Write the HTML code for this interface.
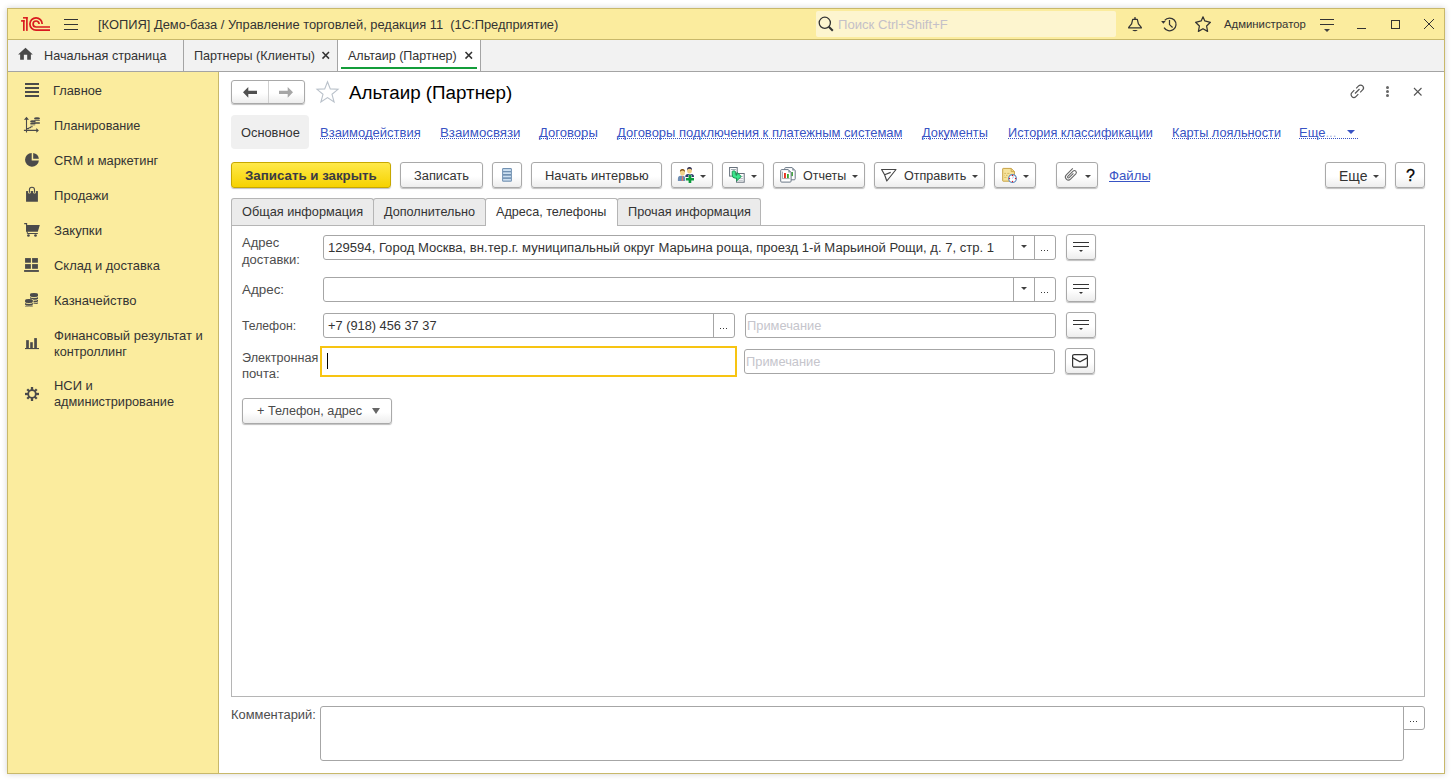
<!DOCTYPE html>
<html><head><meta charset="utf-8">
<style>
*{box-sizing:border-box;margin:0;padding:0}
html,body{width:1452px;height:781px;overflow:hidden;background:#fff;font-family:"Liberation Sans",sans-serif;font-size:13px;color:#333}
.a{position:absolute}
.t{position:absolute;white-space:nowrap;line-height:16px;font-size:13px}
#win{position:absolute;left:7px;top:8px;width:1438px;height:766px;border:1px solid #c8b86a;box-shadow:0 0 6px rgba(0,0,0,0.18);background:#fff;overflow:hidden}
svg{position:absolute;overflow:visible}
.btn{position:absolute;border:1px solid #a9a9a9;border-radius:3px;background:linear-gradient(#fff 0%,#fff 55%,#ededed 100%);box-shadow:0 1px 1px rgba(0,0,0,0.25)}
.fld{position:absolute;border:1px solid #a6a6a6;border-radius:3px;background:#fff}
.lnk{position:absolute;white-space:nowrap;line-height:16px;font-size:13px;color:#3853c4;border-bottom:1px dotted #3853c4;height:15px}
.dd{position:absolute;width:0;height:0;border-left:3px solid transparent;border-right:3px solid transparent;border-top:3px solid #404040}
</style></head><body>
<div id="win"></div>

<!-- title bar -->
<div class="a" style="left:8px;top:9px;width:1436px;height:30px;background:#fbec9e"></div>
<div class="a" style="left:8px;top:39px;width:1436px;height:1px;background:#c8b86a"></div>
<svg style="left:18px;top:14px" width="36" height="20" viewBox="0 0 36 20">
 <g fill="#d9191f">
 <rect x="3.07" y="6.1" width="3.6" height="1.6"/><rect x="5" y="6.1" width="1.66" height="10.8"/>
 <rect x="5" y="3.07" width="4.7" height="1.55"/><rect x="8.07" y="3.07" width="1.63" height="13.83"/>
 </g>
 <g fill="none" stroke="#d9191f" stroke-width="1.7">
 <path d="M24.2 10 A6.15 6.15 0 1 0 18.1 16.15 L32 16.15"/>
 <path d="M21.1 10 A3 3 0 1 0 18.1 13 L32 13"/>
 </g>
</svg>
<div class="a" style="left:64px;top:19px;width:14px;height:1px;background:#333"></div>
<div class="a" style="left:64px;top:24px;width:14px;height:1px;background:#333"></div>
<div class="a" style="left:64px;top:29px;width:14px;height:1px;background:#333"></div>
<div class="t" style="left:98px;top:17px;font-size:12.88px;color:#333">[КОПИЯ] Демо-база / Управление торговлей, редакция 11&nbsp; (1С:Предприятие)</div>

<div class="a" style="left:816px;top:11px;width:300px;height:26px;background:#fdf5cf;border-radius:2px"></div>
<svg style="left:818px;top:16px" width="16" height="16" viewBox="0 0 16 16"><circle cx="6.8" cy="6.8" r="5.6" fill="none" stroke="#333" stroke-width="1.3"/><path d="M10.8 10.8 L14.8 14.8" stroke="#333" stroke-width="2"/></svg>
<div class="t" style="left:838px;top:17px;color:#c4c0c8;font-size:13.1px">Поиск Ctrl+Shift+F</div>

<!-- bell -->
<svg style="left:1124px;top:14px" width="22" height="20" viewBox="0 0 22 20"><path d="M8.7 5.3 H13.3 L14.4 9.8 L17.3 13.4 V13.9 H4.7 V13.4 L7.6 9.8 Z" fill="none" stroke="#333" stroke-width="1.25" stroke-linejoin="round"/><rect x="10.3" y="3.1" width="1.4" height="2.2" fill="#333"/><path d="M8.2 16 H13.8 Q11 18.6 8.2 16 Z" fill="#333"/></svg>
<!-- history -->
<svg style="left:1158px;top:14px" width="22" height="20" viewBox="0 0 22 20"><path d="M6.7 6.3 A6.4 6.4 0 1 1 6.06 13.6" fill="none" stroke="#333" stroke-width="1.25"/><path d="M3.1 7 L7.7 7 L5.4 9.7 Z" fill="#333"/><path d="M11.5 6.1 V10.6 L14.6 13.5" fill="none" stroke="#333" stroke-width="1.25"/></svg>
<!-- star -->
<svg style="left:1192px;top:14px" width="22" height="20" viewBox="0 0 22 20"><path d="M11 2.8 L12.8 6.9 L18.4 8.3 L14.6 12 L15.6 17.4 L11 14.7 L6.4 17.4 L7.4 12 L3.6 8.3 L9.2 6.9 Z" fill="none" stroke="#333" stroke-width="1.25" stroke-linejoin="round"/></svg>
<div class="t" style="left:1224px;top:16px;font-size:11.35px;color:#333">Администратор</div>
<!-- filter icon -->
<div class="a" style="left:1320px;top:19px;width:14px;height:1px;background:#333"></div>
<div class="a" style="left:1320px;top:24px;width:14px;height:1px;background:#333"></div>
<div class="dd" style="left:1324px;top:29px"></div>
<div class="a" style="left:1357px;top:28px;width:9px;height:1px;background:#333"></div>
<div class="a" style="left:1391px;top:20px;width:9px;height:9px;border:1px solid #333"></div>
<svg style="left:1424px;top:19px" width="10" height="10" viewBox="0 0 10 10"><path d="M0 0 L10 10 M10 0 L0 10" stroke="#333" stroke-width="1"/></svg>

<!-- open tabs bar -->
<div class="a" style="left:8px;top:40px;width:1436px;height:31px;background:#f2f2f2"></div>
<div class="a" style="left:8px;top:71px;width:1436px;height:1px;background:#a4a4a4"></div>
<svg style="left:14px;top:44px" width="24" height="20" viewBox="0 0 24 20"><path d="M4.1 10.6 L11.5 3.84 L18.8 10.6 L16.9 10.6 L16.9 15.75 L13.2 15.75 L13.2 10.76 L9.86 10.76 L9.86 15.75 L6.15 15.75 L6.15 10.6 Z" fill="#4a4a4a"/></svg>
<div class="t" style="left:44px;top:48px;font-size:12.67px">Начальная страница</div>
<div class="a" style="left:183px;top:40px;width:1px;height:31px;background:#a4a4a4"></div>
<div class="t" style="left:194px;top:48px;font-size:12.6px">Партнеры (Клиенты)</div>
<svg style="left:322px;top:52px" width="8" height="7" viewBox="0 0 8 7"><path d="M0.5 0 L7 6.6 M7 0 L0.5 6.6" stroke="#333" stroke-width="1.5"/></svg>
<div class="a" style="left:337px;top:40px;width:1px;height:31px;background:#a4a4a4"></div>
<div class="a" style="left:338px;top:40px;width:142px;height:31px;background:#fff"></div>
<div class="t" style="left:348px;top:48px;font-size:12.53px">Альтаир (Партнер)</div>
<svg style="left:465px;top:52px" width="8" height="7" viewBox="0 0 8 7"><path d="M0.5 0 L7 6.6 M7 0 L0.5 6.6" stroke="#333" stroke-width="1.5"/></svg>
<div class="a" style="left:341px;top:67px;width:136px;height:2px;background:#139d3a"></div>
<div class="a" style="left:480px;top:40px;width:1px;height:31px;background:#a4a4a4"></div>

<!-- sidebar -->
<div class="a" style="left:8px;top:72px;width:210px;height:701px;background:#fbec9e"></div>
<div class="a" style="left:218px;top:72px;width:1px;height:701px;background:#c8b86a"></div>


<!-- sidebar items -->
<div class="a" style="left:25px;top:83px;width:14px;height:2px;background:#4a4a4a"></div>
<div class="a" style="left:25px;top:87px;width:14px;height:2px;background:#4a4a4a"></div>
<div class="a" style="left:25px;top:91px;width:14px;height:2px;background:#4a4a4a"></div>
<div class="a" style="left:25px;top:95px;width:14px;height:2px;background:#4a4a4a"></div>
<div class="t" style="left:53px;top:83px;font-size:12.82px">Главное</div>
<svg style="left:20px;top:114px" width="24" height="22" viewBox="0 0 24 22"><g fill="none" stroke="#4a4a4a" stroke-width="1.1"><path d="M6.5 4 V18.6 M3.9 16.4 H17"/><path d="M7 14.6 H8.4 L9.2 13.7 H10.2 L11 12.8 H12.7"/></g><g fill="#4a4a4a"><path d="M3.9 5.8 L6.5 2.8 L9 5.8 Z M16.3 14.1 L18.9 16.4 L16.3 18.7 Z"/><ellipse cx="17" cy="4.4" rx="3" ry="1.2"/><rect x="14.1" y="5.9" width="5.9" height="0.9" rx="0.45"/><rect x="14.1" y="7.9" width="5.9" height="0.9" rx="0.45"/><rect x="14.1" y="9" width="5.9" height="0.8" rx="0.4"/><ellipse cx="12.9" cy="7.5" rx="2.8" ry="1.2"/><rect x="10.1" y="9.1" width="5.5" height="0.9" rx="0.45"/><rect x="10.3" y="10.4" width="5.1" height="0.8" rx="0.4"/></g></svg>
<div class="t" style="left:54px;top:118px;font-size:12.66px">Планирование</div>
<svg style="left:20px;top:149px" width="24" height="22" viewBox="0 0 24 22"><g fill="#4a4a4a"><path d="M11.7 3.9 V11.5 H18.9 A6.95 6.95 0 1 1 11.7 3.9 Z"/><path d="M13.2 9.7 V3.9 A6.95 6.95 0 0 1 18.9 9.7 Z"/></g></svg>
<div class="t" style="left:54px;top:153px;font-size:12.89px">CRM и маркетинг</div>
<svg style="left:20px;top:184px" width="24" height="22" viewBox="0 0 24 22"><rect x="6.06" y="7.04" width="11.84" height="10.7" fill="#4a4a4a"/><circle cx="9.4" cy="8" r="1.5" fill="#fbec9e"/><circle cx="14.5" cy="8" r="1.5" fill="#fbec9e"/><path d="M9.4 8.7 V5.8 A2.55 2.55 0 0 1 14.5 5.8 V8.7" fill="none" stroke="#4a4a4a" stroke-width="1.1"/></svg>
<div class="t" style="left:54px;top:188px;font-size:13.08px">Продажи</div>
<svg style="left:20px;top:219px" width="24" height="22" viewBox="0 0 24 22"><path d="M4.2 4.6 H6.6 V12.5" fill="none" stroke="#4a4a4a" stroke-width="1.1"/><path d="M6.2 6 H19.8 L17.8 12.7 H6.2 Z" fill="#4a4a4a"/><path d="M7.3 12.5 V14.5 H17.8" fill="none" stroke="#4a4a4a" stroke-width="1"/><circle cx="8.45" cy="16.5" r="1.35" fill="#4a4a4a"/><circle cx="15.5" cy="16.5" r="1.35" fill="#4a4a4a"/></svg>
<div class="t" style="left:54px;top:223px;font-size:13.16px">Закупки</div>
<svg style="left:20px;top:254px" width="24" height="22" viewBox="0 0 24 22"><g fill="#4a4a4a"><rect x="5.07" y="4.08" width="5.8" height="4.65"/><rect x="12.1" y="4.08" width="5.8" height="4.65"/><rect x="5.07" y="10.1" width="5.8" height="4.7"/><rect x="12.1" y="10.1" width="5.8" height="4.7"/><rect x="4.08" y="16.06" width="14.8" height="1.84"/></g></svg>
<div class="t" style="left:54px;top:258px;font-size:12.93px">Склад и доставка</div>
<svg style="left:20px;top:289px" width="24" height="22" viewBox="0 0 24 22"><path d="M10 5.35 A4 1.3 0 0 1 18 5.35 V13.9 A4 1.2 0 0 1 10 13.9 Z" fill="#4a4a4a"/><g fill="none" stroke="#fbec9e" stroke-width="0.9"><path d="M10 7.4 A4 1.2 0 0 0 18 7.4 M10 10.1 A4 1.2 0 0 0 18 10.1 M10 12.7 A4 1.2 0 0 0 18 12.7"/></g><path d="M4.3 11.3 A4.6 1.9 0 0 1 13.5 11.3 V16.9 A4.6 1.9 0 0 1 4.3 16.9 Z" fill="#fbec9e"/><path d="M5.07 11.3 A3.87 1.25 0 0 1 12.8 11.3 V16.9 A3.87 1.2 0 0 1 5.07 16.9 Z" fill="#4a4a4a"/><g fill="none" stroke="#fbec9e" stroke-width="0.9"><path d="M5.07 13.4 A3.87 1.2 0 0 0 12.8 13.4 M5.07 16.1 A3.87 1.2 0 0 0 12.8 16.1"/></g></svg>
<div class="t" style="left:54px;top:293px;font-size:13.01px">Казначейство</div>
<svg style="left:25px;top:338px" width="14" height="12" viewBox="0 0 14 12"><g fill="#4a4a4a"><rect x="1.15" y="2.15" width="2.7" height="8.2"/><rect x="5.2" y="4.2" width="2.6" height="6.1"/><rect x="9.2" y="0.1" width="2.7" height="10.2"/><rect x="0" y="10" width="14" height="1.1"/></g></svg>
<div class="t" style="left:54px;top:328px">Финансовый результат и</div>
<div class="t" style="left:54px;top:344px;font-size:12.66px">контроллинг</div>
<svg style="left:25px;top:387px" width="14" height="14" viewBox="0 0 14 14"><g fill="#4a4a4a"><circle cx="7" cy="7" r="4.7"/><rect x="5.85" y="0" width="2.3" height="14"/><rect x="5.85" y="0.3" width="2.3" height="13.4" transform="rotate(45 7 7)"/><rect x="5.85" y="0" width="2.3" height="14" transform="rotate(90 7 7)"/><rect x="5.85" y="0.3" width="2.3" height="13.4" transform="rotate(135 7 7)"/></g><circle cx="7" cy="7" r="2.9" fill="#fbec9e"/></svg>
<div class="t" style="left:54px;top:378px;font-size:12.94px">НСИ и</div>
<div class="t" style="left:54px;top:394px;font-size:12.74px">администрирование</div>


<!-- form header -->
<div class="btn" style="left:231px;top:80px;width:74px;height:24px"></div>
<div class="a" style="left:268px;top:81px;width:1px;height:22px;background:#d0d0d0"></div>
<svg style="left:243px;top:87px" width="14" height="11" viewBox="0 0 14 11"><path d="M0 5.3 L5.3 0 V3.8 H14 V6.9 H5.3 V10.7 Z" fill="#505050"/></svg>
<svg style="left:279px;top:87px" width="14" height="11" viewBox="0 0 14 11"><path d="M14 5.3 L8.7 0 V3.8 H0 V6.9 H8.7 V10.7 Z" fill="#a6a6a6"/></svg>
<svg style="left:316px;top:81px" width="23" height="22" viewBox="0 0 23 22"><path d="M11.5 0.8 L14.3 7.9 L22 8.3 L16 13.3 L18.1 21 L11.5 16.6 L4.9 21 L7 13.3 L1 8.3 L8.7 7.9 Z" fill="none" stroke="#b9c1ca" stroke-width="1.1"/></svg>
<div class="t" style="left:349px;top:81px;font-size:18.8px;line-height:24px;color:#000">Альтаир (Партнер)</div>
<svg style="left:1349px;top:83px" width="17" height="17" viewBox="0 0 17 17"><g fill="none" stroke="#555" stroke-width="1.2"><path d="M7.2 5.3 L9.6 2.9 A2.6 2.6 0 0 1 13.6 6.9 L11.2 9.3"/><path d="M9.3 11.2 L6.9 13.6 A2.6 2.6 0 0 1 2.9 9.6 L5.3 7.2"/><path d="M6 10.5 L10.5 6"/></g></svg>
<div class="a" style="left:1386px;top:86px;width:3px;height:3px;border-radius:50%;background:#666"></div>
<div class="a" style="left:1386px;top:90px;width:3px;height:3px;border-radius:50%;background:#666"></div>
<div class="a" style="left:1386px;top:94px;width:3px;height:3px;border-radius:50%;background:#666"></div>
<svg style="left:1414px;top:88px" width="8" height="8" viewBox="0 0 8 8"><path d="M0 0 L7.5 7.5 M7.5 0 L0 7.5" stroke="#555" stroke-width="1.1"/></svg>

<!-- command panel links -->
<div class="a" style="left:231px;top:115px;width:78px;height:34px;background:#f0f0f0;border-radius:4px"></div>
<div class="t" style="left:241px;top:125px;font-size:12.83px">Основное</div>
<div class="t" style="left:320px;top:125px;color:#3853c4">Взаимодействия</div>
<div class="a" style="left:320px;top:138px;width:99px;height:1px;background:repeating-linear-gradient(90deg,#3853c4 0 1px,transparent 1px 2px)"></div>
<div class="t" style="left:440px;top:125px;color:#3853c4;font-size:13.29px">Взаимосвязи</div>
<div class="a" style="left:440px;top:138px;width:79px;height:1px;background:repeating-linear-gradient(90deg,#3853c4 0 1px,transparent 1px 2px)"></div>
<div class="t" style="left:539px;top:125px;color:#3853c4;font-size:13.08px">Договоры</div>
<div class="a" style="left:539px;top:138px;width:58px;height:1px;background:repeating-linear-gradient(90deg,#3853c4 0 1px,transparent 1px 2px)"></div>
<div class="t" style="left:617px;top:125px;color:#3853c4">Договоры подключения к платежным системам</div>
<div class="a" style="left:617px;top:138px;width:285px;height:1px;background:repeating-linear-gradient(90deg,#3853c4 0 1px,transparent 1px 2px)"></div>
<div class="t" style="left:922px;top:125px;color:#3853c4;font-size:12.78px">Документы</div>
<div class="a" style="left:922px;top:138px;width:65px;height:1px;background:repeating-linear-gradient(90deg,#3853c4 0 1px,transparent 1px 2px)"></div>
<div class="t" style="left:1008px;top:125px;color:#3853c4;font-size:12.72px">История классификации</div>
<div class="a" style="left:1008px;top:138px;width:143px;height:1px;background:repeating-linear-gradient(90deg,#3853c4 0 1px,transparent 1px 2px)"></div>
<div class="t" style="left:1172px;top:125px;color:#3853c4;font-size:12.75px">Карты лояльности</div>
<div class="a" style="left:1172px;top:138px;width:107px;height:1px;background:repeating-linear-gradient(90deg,#3853c4 0 1px,transparent 1px 2px)"></div>
<div class="t" style="left:1299px;top:125px;color:#3853c4">Еще<span style="color:#a9b4e0">...</span></div>
<div class="a" style="left:1347px;top:130px;width:0;height:0;border-left:4px solid transparent;border-right:4px solid transparent;border-top:4px solid #3853c4"></div>
<div class="a" style="left:1299px;top:138px;width:59px;height:1px;background:repeating-linear-gradient(90deg,#3853c4 0 1px,transparent 1px 2px)"></div>

<!-- toolbar -->
<div class="a" style="left:231px;top:162px;width:160px;height:26px;border:1px solid #c7a800;border-radius:3px;background:linear-gradient(#ffe94a,#f6d200);box-shadow:0 1px 1px rgba(0,0,0,0.25)"></div>
<div class="t" style="left:245px;top:168px;font-weight:bold;font-size:13.3px;color:#3a3a44">Записать и закрыть</div>
<div class="btn" style="left:400px;top:162px;width:83px;height:26px"></div>
<div class="t" style="left:414px;top:168px;color:#333;font-size:12.85px">Записать</div>
<div class="btn" style="left:492px;top:162px;width:30px;height:26px"></div>
<svg style="left:496px;top:164px" width="22" height="22" viewBox="0 0 22 22"><rect x="6.1" y="4" width="9.8" height="13.8" rx="1.3" fill="#7191b2"/><g fill="#cde0f1"><rect x="7.1" y="5.1" width="7.8" height="1.9"/><rect x="7.1" y="8.3" width="7.8" height="1.7"/><rect x="7.1" y="11.7" width="7.8" height="1.6"/><rect x="7.1" y="14.9" width="7.8" height="1.7"/></g></svg>
<div class="btn" style="left:531px;top:162px;width:131px;height:26px"></div>
<div class="t" style="left:545px;top:168px;color:#333;font-size:12.9px">Начать интервью</div>

<div class="btn" style="left:671px;top:162px;width:42px;height:26px"></div>
<svg style="left:674px;top:164px" width="24" height="22" viewBox="0 0 24 22">
<path d="M11.3 12.7 Q11.3 9.9 14 9.9 H17.3 Q20 9.9 20 12.7 V13 H11.3 Z" fill="#2e3a6c"/>
<ellipse cx="15.5" cy="6.6" rx="2.4" ry="3" fill="#f0cf85"/><path d="M13 6.2 Q13 3 15.5 3 Q18 3 18 6.2 Q17 4.6 15.5 4.8 Q14 4.6 13 6.2 Z" fill="#2a2a52"/>
<path d="M3.9 16.9 V14.8 Q3.9 11.8 6.8 11.8 H8.4 Q11.3 11.8 11.3 14.8 V16.9 Z" fill="#6d8db3"/><path d="M8 12 H8.9 L9.2 16.9 H7.7 Z" fill="#e27a64"/>
<ellipse cx="8.45" cy="8.4" rx="2.5" ry="3.1" fill="#f2d48c"/><path d="M5.9 8 Q5.9 4.9 8.45 4.9 Q11 4.9 11 8 Q10 6.3 8.45 6.5 Q6.9 6.3 5.9 8 Z" fill="#7a4a12"/>
<path d="M14.6 11 H17.3 V13.9 H20 V16.6 H17.3 V18.9 H14.6 V16.6 H12 V13.9 H14.6 Z" fill="#0b9a3c" stroke="#fff" stroke-width="0.7" paint-order="stroke"/>
</svg>
<div class="dd" style="left:700px;top:175px"></div>
<div class="btn" style="left:722px;top:162px;width:42px;height:26px"></div>
<svg style="left:726px;top:164px" width="24" height="22" viewBox="0 0 24 22"><rect x="3.6" y="3.5" width="7.6" height="8.6" fill="#fff" stroke="#67717c" stroke-width="1"/><path d="M5 5.5 H9.9" stroke="#8a96a0" stroke-width="0.8"/><rect x="10.5" y="9.5" width="7.7" height="8.7" fill="#fff" stroke="#67717c" stroke-width="1"/><path d="M12.3 12.4 H16.9 M12.3 14.5 H16.9 M12.3 16.3 H16.9" stroke="#9aa4ae" stroke-width="0.7"/><path d="M6.2 7.6 Q6.2 6.9 7.2 6.9 H8.6 Q9.4 6.9 9.4 7.6 V10.4 Q9.4 11.2 10.2 11.2 H10.9 V8.4 L15.3 12.5 L10.7 16.9 V14.2 H9.4 Q6.2 14.2 6.2 11 Z" fill="#3de68c" stroke="#12904a" stroke-width="0.9"/></svg>
<div class="dd" style="left:751px;top:175px"></div>
<div class="btn" style="left:773px;top:162px;width:92px;height:26px"></div>
<svg style="left:776px;top:164px" width="24" height="22" viewBox="0 0 24 22"><path d="M9.7 3.6 H16.2 L19.2 6.6 V14.8 Q19.2 15.8 18.2 15.8 H9.7 Q8.7 15.8 8.7 14.8 V4.6 Q8.7 3.6 9.7 3.6 Z" fill="#fff" stroke="#6b7886" stroke-width="1"/><path d="M16.2 3.6 V6.6 H19.2" fill="#8a96a2"/><rect x="15.2" y="8" width="1.7" height="4.1" fill="#34a52c"/><path d="M5.7 5.6 H12.3 L15.1 8.4 V17.1 Q15.1 18.1 14.1 18.1 H5.7 Q4.7 18.1 4.7 17.1 V6.6 Q4.7 5.6 5.7 5.6 Z" fill="#fff" stroke="#6b7886" stroke-width="1"/><path d="M12.3 5.6 V8.5 H15.1 Z" fill="#8a96a2"/><path d="M6.5 7.6 V14.6 H13.7" fill="none" stroke="#8a8a90" stroke-width="0.7"/><rect x="8" y="9" width="1.9" height="5.1" fill="#e8321e"/><rect x="11" y="10" width="1.8" height="4.1" fill="#34a52c"/></svg>
<div class="t" style="left:803px;top:168px;color:#333;font-size:12.55px">Отчеты</div>
<div class="dd" style="left:852px;top:175px"></div>
<div class="btn" style="left:874px;top:162px;width:111px;height:26px"></div>
<svg style="left:878px;top:164px" width="24" height="22" viewBox="0 0 24 22"><path d="M3.6 5.5 H18 L8.8 17 L6.6 10.8 Z M6.6 10.8 L12.7 8.4" fill="none" stroke="#454545" stroke-width="1.15" stroke-linejoin="round"/></svg>
<div class="t" style="left:904px;top:168px;color:#333;font-size:12.57px">Отправить</div>
<div class="dd" style="left:972px;top:175px"></div>
<div class="btn" style="left:994px;top:162px;width:42px;height:26px"></div>
<svg style="left:998px;top:164px" width="24" height="22" viewBox="0 0 24 22"><path d="M5.2 4.4 H13.2 L16.4 7.6 V16.7 Q16.4 17.2 15.9 17.2 H5.2 Q4.7 17.2 4.7 16.7 V4.9 Q4.7 4.4 5.2 4.4 Z" fill="#f6e39c" stroke="#c8a244" stroke-width="1"/><path d="M13.2 4.4 V7.6 H16.4" fill="none" stroke="#c8a244" stroke-width="0.9"/><path d="M6.2 9.4 H8 M9.2 9.4 H11.5 M6.2 11.4 H6.8 M8 11.4 H9.5 M6.2 13.4 H8.5" stroke="#d6b65e" stroke-width="0.9"/><circle cx="14.5" cy="14.5" r="3.9" fill="#fff" stroke="#5b88bd" stroke-width="1.1"/><g fill="#e0161b"><circle cx="14.5" cy="11.5" r="0.65"/><circle cx="14.5" cy="17.5" r="0.65"/><circle cx="11.5" cy="14.5" r="0.65"/><circle cx="17.5" cy="14.5" r="0.65"/></g><path d="M14.5 14.5 L15.8 12.4" stroke="#8eb4e0" stroke-width="0.8"/></svg>
<div class="dd" style="left:1023px;top:175px"></div>
<div class="btn" style="left:1056px;top:162px;width:42px;height:26px"></div>
<svg style="left:1060px;top:164px" width="24" height="22" viewBox="0 0 24 22"><path d="M12.8 4.4 L6.3 10.9 A2.97 2.97 0 0 0 10.5 15.1 L15.8 9.8 A1.91 1.91 0 0 0 13.1 7.1 L7.8 12.4 A0.92 0.92 0 0 0 9.1 13.7 L13.4 9.4" fill="none" stroke="#666" stroke-width="1.1"/></svg>
<div class="dd" style="left:1085px;top:175px"></div>
<div class="t" style="left:1109px;top:168px;color:#3853c4;font-size:13.18px">Файлы</div>
<div class="a" style="left:1109px;top:181px;width:41px;height:1px;background:#3853c4"></div>
<div class="btn" style="left:1325px;top:162px;width:61px;height:26px"></div>
<div class="t" style="left:1339px;top:168px;color:#333;font-size:13.97px">Еще</div>
<div class="dd" style="left:1373px;top:175px"></div>
<div class="btn" style="left:1395px;top:162px;width:30px;height:26px"></div>
<div class="t" style="left:1406px;top:168px;color:#000;font-size:16px;-webkit-text-stroke:0.3px #000">?</div>

<!-- form tabs -->
<div class="a" style="left:231px;top:225px;width:1194px;height:472px;border:1px solid #b5b5b5"></div>
<div class="a" style="left:231px;top:198px;width:143px;height:27px;border:1px solid #b5b5b5;border-bottom:none;border-radius:3px 3px 0 0;background:#ebebeb"></div>
<div class="t" style="left:242px;top:204px;font-size:12.74px">Общая информация</div>
<div class="a" style="left:373px;top:198px;width:113px;height:27px;border:1px solid #b5b5b5;border-bottom:none;border-radius:3px 3px 0 0;background:#ebebeb"></div>
<div class="t" style="left:384px;top:204px;font-size:12.67px">Дополнительно</div>
<div class="a" style="left:617px;top:198px;width:144px;height:27px;border:1px solid #b5b5b5;border-bottom:none;border-radius:3px 3px 0 0;background:#ebebeb"></div>
<div class="t" style="left:628px;top:204px;font-size:12.73px">Прочая информация</div>
<div class="a" style="left:485px;top:198px;width:133px;height:28px;border:1px solid #b5b5b5;border-bottom:none;border-radius:3px 3px 0 0;background:#fff"></div>
<div class="a" style="left:486px;top:225px;width:131px;height:1px;background:#fff"></div>
<div class="t" style="left:496px;top:204px;color:#333;font-size:12.64px">Адреса, телефоны</div>

<!-- rows -->
<div class="t" style="left:242px;top:235px;color:#4d4d4d;font-size:12.98px">Адрес</div>
<div class="t" style="left:242px;top:252px;color:#4d4d4d;font-size:13.03px">доставки:</div>
<div class="fld" style="left:323px;top:235px;width:733px;height:25px"></div>
<div class="a" style="left:1013px;top:236px;width:1px;height:23px;background:#a6a6a6"></div>
<div class="a" style="left:1034px;top:236px;width:1px;height:23px;background:#a6a6a6"></div>
<div class="dd" style="left:1021px;top:245px"></div>
<div class="a" style="left:1041px;top:250px;width:1px;height:1px;background:#3a3a3a"></div><div class="a" style="left:1044px;top:250px;width:1px;height:1px;background:#3a3a3a"></div><div class="a" style="left:1047px;top:250px;width:1px;height:1px;background:#3a3a3a"></div>
<div class="t" style="left:328px;top:240px;color:#333;font-size:13.09px">129594, Город Москва, вн.тер.г. муниципальный округ Марьина роща, проезд 1-й Марьиной Рощи, д. 7, стр. 1</div>
<div class="btn" style="left:1066px;top:234px;width:30px;height:26px"></div>
<div class="a" style="left:1073px;top:242px;width:16px;height:1px;background:#333"></div>
<div class="a" style="left:1073px;top:246px;width:16px;height:1px;background:#333"></div>
<div class="a" style="left:1079px;top:250px;width:0;height:0;border-left:2.5px solid transparent;border-right:2.5px solid transparent;border-top:2.5px solid #333"></div>

<div class="t" style="left:242px;top:282px;color:#4d4d4d;font-size:13.4px">Адрес:</div>
<div class="fld" style="left:323px;top:277px;width:733px;height:25px"></div>
<div class="a" style="left:1013px;top:278px;width:1px;height:23px;background:#a6a6a6"></div>
<div class="a" style="left:1034px;top:278px;width:1px;height:23px;background:#a6a6a6"></div>
<div class="dd" style="left:1021px;top:287px"></div>
<div class="a" style="left:1041px;top:292px;width:1px;height:1px;background:#3a3a3a"></div><div class="a" style="left:1044px;top:292px;width:1px;height:1px;background:#3a3a3a"></div><div class="a" style="left:1047px;top:292px;width:1px;height:1px;background:#3a3a3a"></div>
<div class="btn" style="left:1066px;top:276px;width:30px;height:26px"></div>
<div class="a" style="left:1073px;top:284px;width:16px;height:1px;background:#333"></div>
<div class="a" style="left:1073px;top:288px;width:16px;height:1px;background:#333"></div>
<div class="a" style="left:1079px;top:292px;width:0;height:0;border-left:2.5px solid transparent;border-right:2.5px solid transparent;border-top:2.5px solid #333"></div>

<div class="t" style="left:242px;top:318px;color:#4d4d4d;font-size:12.23px">Телефон:</div>
<div class="fld" style="left:323px;top:313px;width:412px;height:25px"></div>
<div class="a" style="left:713px;top:314px;width:1px;height:23px;background:#a6a6a6"></div>
<div class="a" style="left:720px;top:328px;width:1px;height:1px;background:#3a3a3a"></div><div class="a" style="left:723px;top:328px;width:1px;height:1px;background:#3a3a3a"></div><div class="a" style="left:726px;top:328px;width:1px;height:1px;background:#3a3a3a"></div>
<div class="t" style="left:328px;top:318px;color:#333;font-size:12.81px">+7 (918) 456 37 37</div>
<div class="fld" style="left:745px;top:313px;width:311px;height:25px"></div>
<div class="t" style="left:747px;top:318px;color:#c5c5cc;font-size:12.87px">Примечание</div>
<div class="btn" style="left:1066px;top:312px;width:30px;height:26px"></div>
<div class="a" style="left:1073px;top:320px;width:16px;height:1px;background:#333"></div>
<div class="a" style="left:1073px;top:324px;width:16px;height:1px;background:#333"></div>
<div class="a" style="left:1079px;top:328px;width:0;height:0;border-left:2.5px solid transparent;border-right:2.5px solid transparent;border-top:2.5px solid #333"></div>

<div class="t" style="left:242px;top:350px;color:#4d4d4d;font-size:12.62px">Электронная</div>
<div class="t" style="left:242px;top:366px;color:#4d4d4d;font-size:13.08px">почта:</div>
<div class="a" style="left:320px;top:346px;width:417px;height:31px;border:2px solid #f7c412;background:#fff"></div>
<div class="a" style="left:327px;top:353px;width:1px;height:16px;background:#000"></div>
<div class="fld" style="left:744px;top:349px;width:311px;height:25px"></div>
<div class="t" style="left:746px;top:354px;color:#c5c5cc;font-size:12.87px">Примечание</div>
<div class="btn" style="left:1065px;top:348px;width:30px;height:26px"></div>
<svg style="left:1071px;top:353px" width="18" height="16" viewBox="0 0 18 16"><rect x="1.6" y="1.6" width="14.8" height="12.6" rx="1.5" fill="none" stroke="#333" stroke-width="1.2"/><path d="M1.8 4.9 L9 8.7 L16.2 4.9" fill="none" stroke="#333" stroke-width="1.2"/></svg>

<div class="btn" style="left:242px;top:398px;width:150px;height:26px"></div>
<div class="t" style="left:257px;top:403px;color:#4a4a4a;font-size:12.65px">+ Телефон, адрес</div>
<div class="a" style="left:372px;top:408px;width:0;height:0;border-left:4px solid transparent;border-right:4px solid transparent;border-top:6px solid #666"></div>

<!-- comment -->
<div class="t" style="left:231px;top:707px;color:#4d4d4d;font-size:12.91px">Комментарий:</div>
<div class="fld" style="left:320px;top:706px;width:1084px;height:55px;border-radius:3px 0 3px 3px"></div>
<div class="fld" style="left:1403px;top:706px;width:22px;height:24px;border-radius:0 3px 3px 0"></div>
<div class="a" style="left:1410px;top:721px;width:1px;height:1px;background:#3a3a3a"></div><div class="a" style="left:1413px;top:721px;width:1px;height:1px;background:#3a3a3a"></div><div class="a" style="left:1416px;top:721px;width:1px;height:1px;background:#3a3a3a"></div>

</body></html>
